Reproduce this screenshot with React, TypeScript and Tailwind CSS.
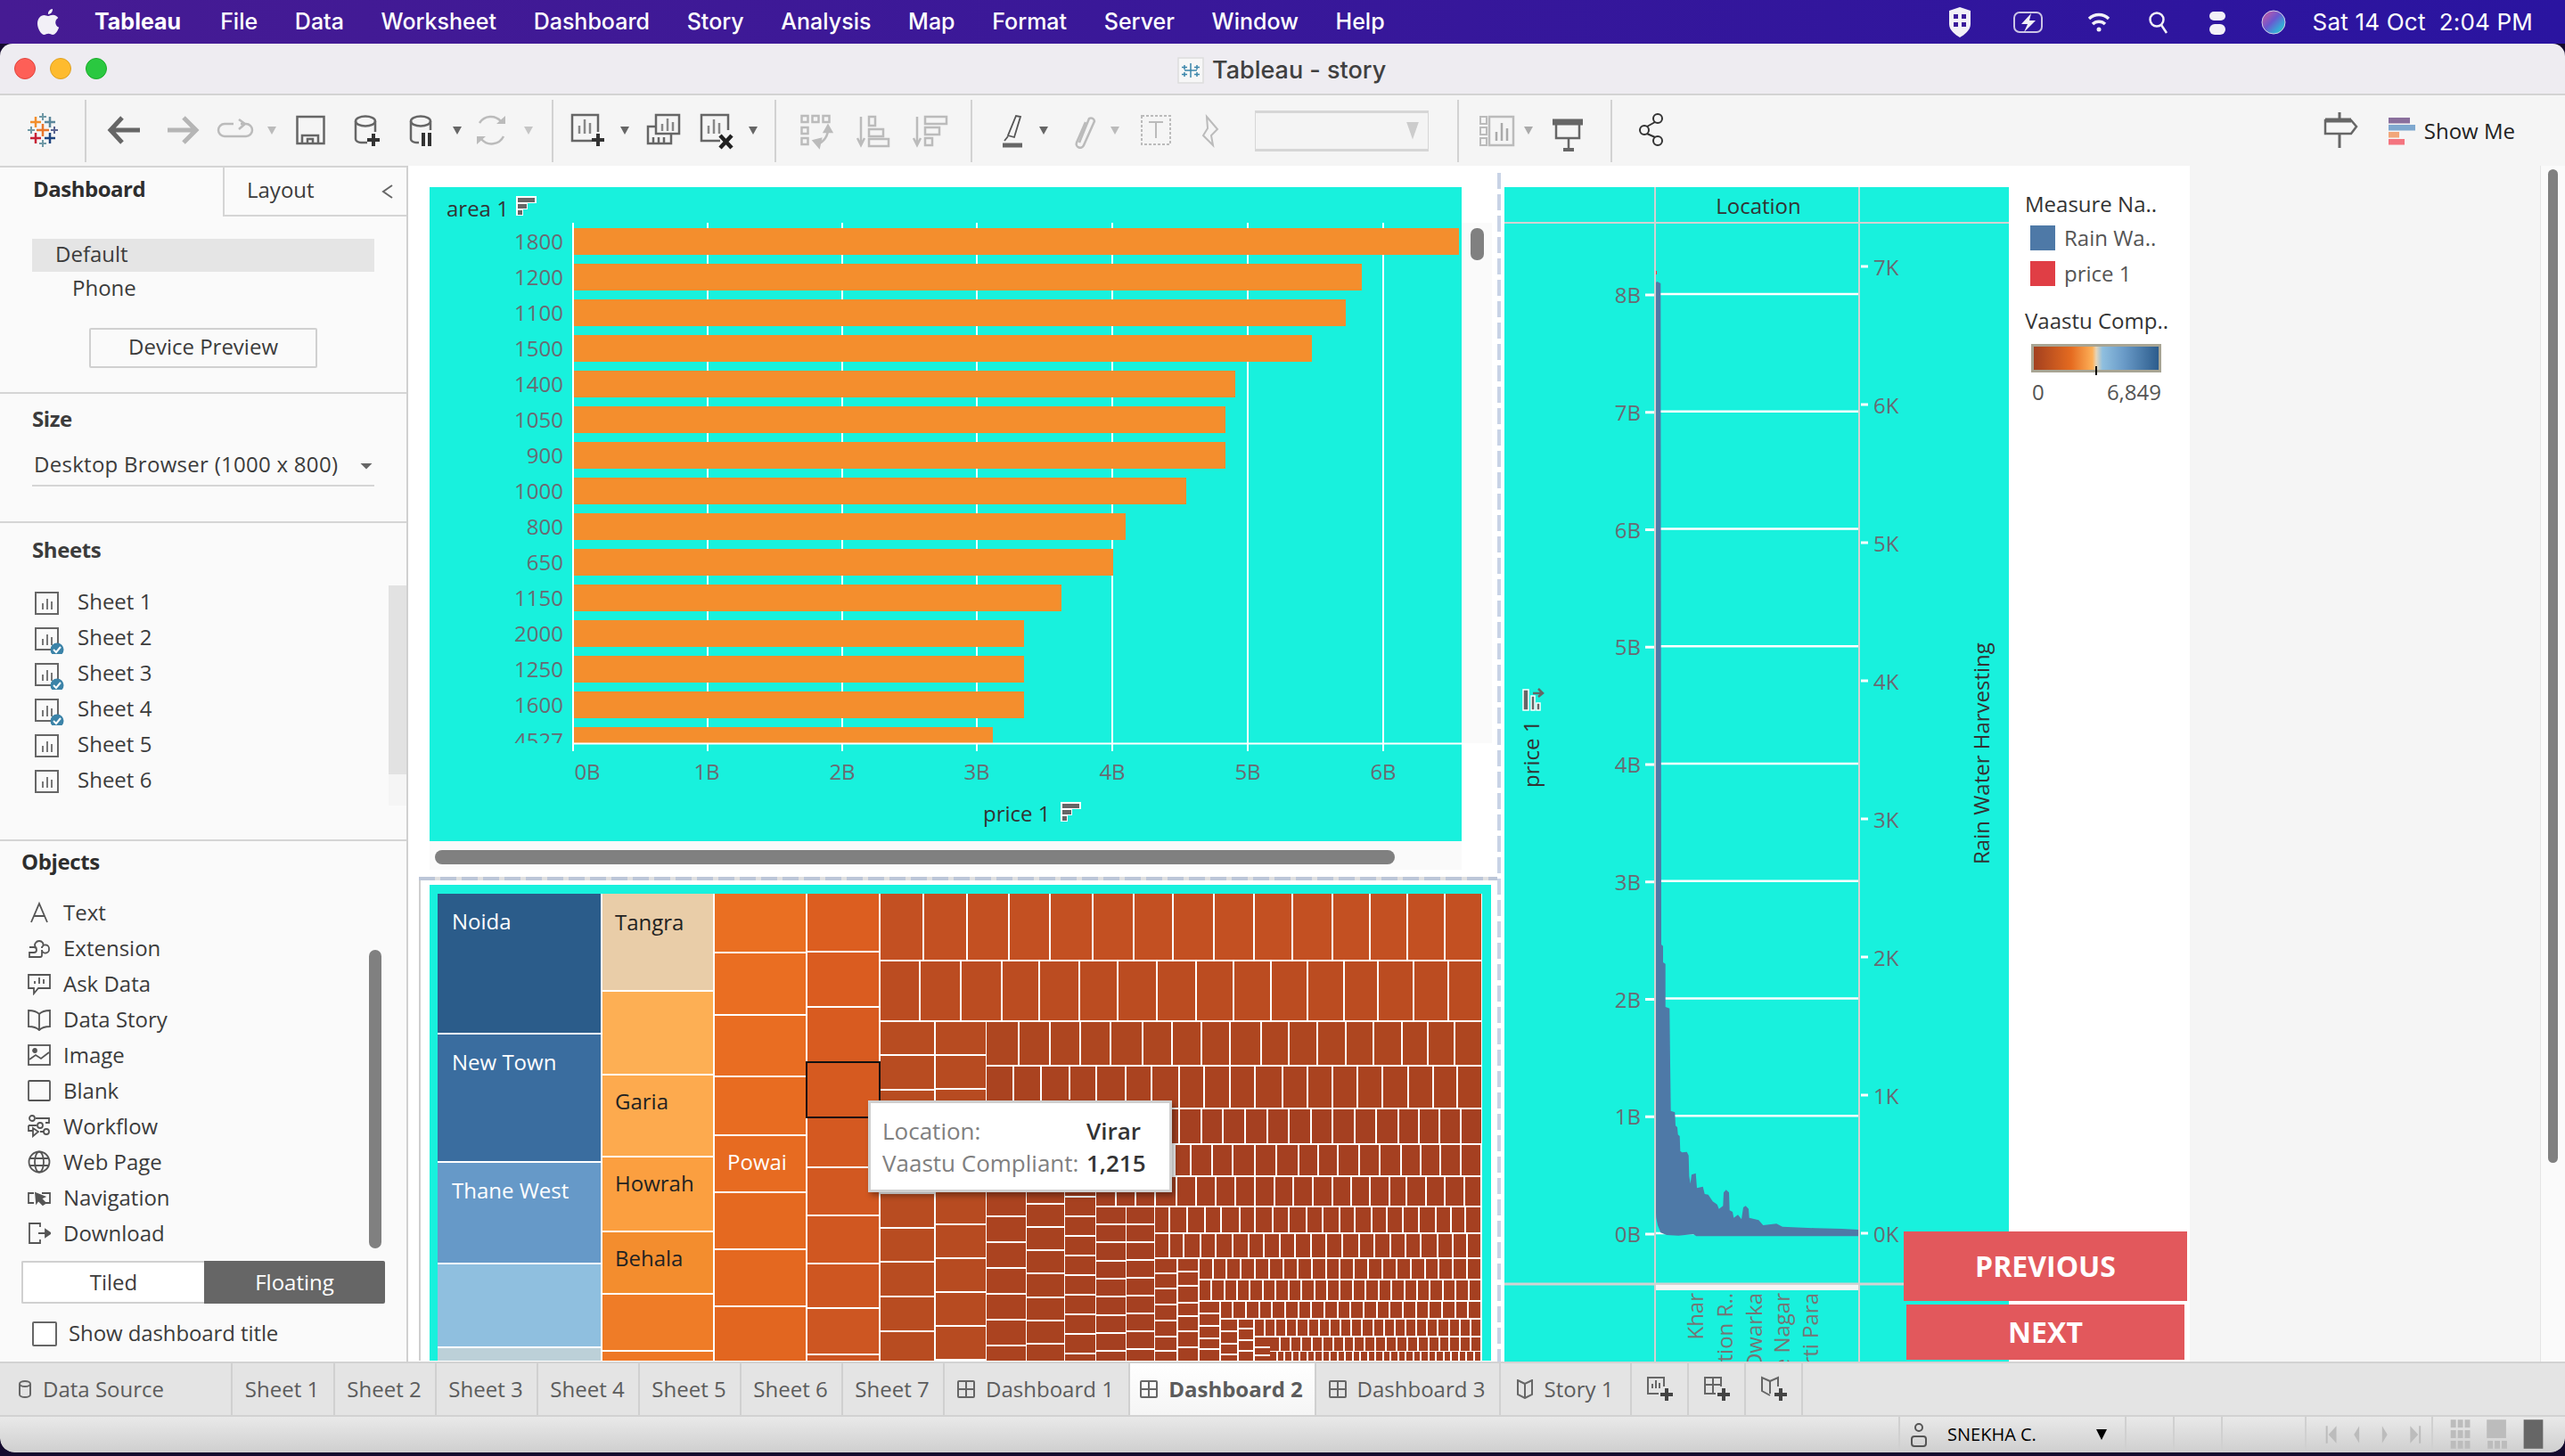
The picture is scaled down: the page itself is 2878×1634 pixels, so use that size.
import React from 'react';

const F = "'Open Sans', sans-serif";
const CY = '#18f1dd';

type Cell = [number, number, number, number, string];
const cells: Cell[] = [];
const zx = (x: number) => 470 + x / 1.285;
const zy = (y: number) => 980 + y / 2.8;
const ax = (x: number) => 980 + x / 2.272;
const ay = (y: number) => 1270 + y / 3;
const range = (s: number, st: number, n: number) => Array.from({ length: n }, (_, i) => s + st * i);
const END = 1532;
function vcol(x0: number, x1: number, tops: number[], fill: string | string[]) {
  tops.forEach((t, i) => {
    const b = i + 1 < tops.length ? tops[i + 1] - 2 : END;
    cells.push([x0, t, x1 - x0, b - t, Array.isArray(fill) ? fill[i] : fill]);
  });
}
function hrow(y0: number, y1: number, xs: number[], fill: string) {
  for (let i = 0; i + 1 < xs.length; i++) cells.push([xs[i], y0, xs[i + 1] - xs[i] - 2, y1 - y0, fill]);
}
const urow = (y0: number, y1: number, x0: number, x1: number, n: number, fill: string) =>
  hrow(y0, y1, range(x0, (x1 - x0) / n, n + 1), fill);

vcol(zx(27), zx(262), [66, 509, 912, 1231, 1494].map(zy), ['#2b5c8a', '#3a6d9f', '#6699c8', '#8fbfdf', '#bcd0d8']);
vcol(zx(265), zx(424), [66, 374, 637, 895, 1131, 1326, 1505].map(zy), ['#e9cda8', '#fdaf54', '#fdaa4e', '#fb9f40', '#f38d2e', '#ef7c27', '#ee7726']);
vcol(zx(427), zx(558), [66, 256, 452, 643, 828, 1007, 1186, 1365].map(zy), ['#ea6f22', '#ea6e22', '#e96d22', '#e86c21', '#e76b21', '#e56920', '#e46820', '#e26620']);
vcol(zx(560), zx(663), [66, 251, 425, 598, 774, 929, 1080, 1231, 1371, 1517].map(zy), ['#dc5e20', '#da5c20', '#d85b20', '#d65a20', '#d45921', '#d25821', '#d05721', '#ce5621', '#cd5622', '#cc5522']);
hrow(zy(66), zy(274), [665, 729, 791, 852, 911, 973, 1032, 1089, 1148, 1205, 1261, 1318, 1372, 1426, 1480, 1534.5].map(zx), '#c35022');
hrow(zy(279), zy(465), [665, 723, 783, 842, 896, 953, 1009, 1065, 1122, 1176, 1230, 1282, 1335, 1384, 1435, 1485, 1534.5].map(zx), '#bb4c21');
vcol(zx(665), zx(743), range(zy(469), 38.7, 11), '#b84c21');
vcol(zx(745), zx(817), range(zy(469), 38, 11), '#b74b21');
hrow(zy(469), zy(606), [819, 866, 911, 955, 998, 1045, 1087, 1130, 1171, 1215, 1256, 1297, 1338, 1377, 1418, 1456, 1494, 1534.5].map(zx), '#ae4620');
hrow(zy(610), zy(740), [819, 859, 898, 939, 978, 1020, 1058, 1097, 1133, 1171, 1207, 1246, 1283, 1318, 1354, 1390, 1427, 1463, 1498, 1534.5].map(zx), '#aa4320');
vcol(zx(819), zx(875), range(1251, 29, 10), '#ab4320');
vcol(zx(877), zx(930), range(1248, 26.2, 11), '#a84220');
vcol(zx(931), zx(975), range(1235, 22, 14), '#a74120');
vcol(ax(568), ax(642), range(1355.7, 20.3, 9), '#a54021');
vcol(ax(645), ax(715), range(1355.7, 20, 9), '#a54021');
hrow(zy(744), zy(852), [1065, 1097, 1130, 1160, 1193, 1225, 1256, 1287, 1318, 1350, 1382, 1413, 1443, 1473, 1503, 1534.5].map(zx), '#a54021');
hrow(ay(47), ay(150), [770, 810, 865, 918, 975, 1030, 1085, 1135, 1187, 1240, 1292, 1347, 1397, 1447, 1500, 1552].map(ax), '#a54021');
hrow(ay(155), ay(252), [568, 620, 670, 720, 775, 825, 875, 925, 975, 1025, 1072, 1122, 1172, 1220, 1268, 1317, 1362, 1412, 1458, 1508, 1552].map(ax), '#a54021');
hrow(ay(257), ay(342), [718, 757, 803, 848, 888, 935, 975, 1020, 1062, 1107, 1148, 1190, 1230, 1272, 1312, 1352, 1393, 1435, 1475, 1512, 1552].map(ax), '#a54021');
hrow(ay(347), ay(427), [718, 757, 793, 835, 875, 917, 958, 998, 1038, 1077, 1117, 1157, 1198, 1240, 1280, 1320, 1358, 1398, 1440, 1478, 1515, 1552].map(ax), '#a54021');
vcol(ax(718), ax(773), [432, 484, 533, 587, 641, 695, 743].map(ay), '#a54021');
vcol(ax(777), ax(828), [432, 478, 526, 581, 628, 677, 731].map(ay), '#a54021');
urow(ay(432), ay(498), ax(831), ax(1552), 20, '#a54021');
urow(ay(503), ay(570), ax(831), ax(1552), 22, '#a54021');
vcol(ax(832), ax(882), [575, 617, 659, 701, 737].map(ay), '#a54021');
urow(ay(575), ay(630), ax(885), ax(1552), 20, '#a54021');
vcol(ax(885), ax(928), [635, 678, 719, 755].map(ay), '#a54021');
vcol(ax(932), ax(968), [635, 670, 707, 743].map(ay), '#a54021');
urow(ay(635), ay(690), ax(972), ax(1552), 21, '#a54021');
vcol(ax(972), ax(1010), [695, 731, 760].map(ay), '#a54021');
urow(ay(695), ay(740), ax(1012), ax(1552), 20, '#a54021');
urow(ay(743), ay(780), ax(1012), ax(1552), 28, '#a54021');

const bars = [1637, 1528, 1510, 1472, 1386, 1375, 1375, 1331, 1263, 1249, 1191, 1149, 1149, 1149, 1114];
const barLabels = ['1800', '1200', '1100', '1500', '1400', '1050', '900', '1000', '800', '650', '1150', '2000', '1250', '1600', '4527'];
const gridX = [794, 945, 1096, 1248, 1400, 1552];

function SortIcon({ x, y }: { x: number; y: number }) {
  return (
    <g transform={`translate(${x} ${y})`}>
      <path d="M0 0H23V8H13V15H8V22H0Z" fill="#fff" />
      <path d="M2 2H21V7H2ZM2 9H12V14H2ZM2 16H7V21H2Z" fill="#666" />
    </g>
  );
}

function BarChart() {
  return (
    <svg width={1158} height={734} viewBox="482 210 1158 734" className="block shrink-0" fontFamily={F} fontSize={24}>
      <rect x={482} y={210} width={1158} height={734} fill={CY} />
      <path d={`M${gridX.map((x) => `${x} 250V843`).join('M')}`} stroke="#fff" strokeWidth={2} />
      {bars.map((b, i) => (
        <g key={i}>
          <rect x={643} y={256 + i * 40} width={b - 643} height={30} fill="#f48e2d" />
          <text x={632} y={280 + i * 40} textAnchor="end" fill="#6a6a72">{barLabels[i]}</text>
        </g>
      ))}
      <rect x={482} y={834} width={1158} height={110} fill={CY} />
      <path d={`M${gridX.map((x) => `${x} 834V843`).join('M')}`} stroke="#fff" strokeWidth={2} />
      <path d="M643 250V843M643 834.5H1640" stroke="#fff" strokeWidth={2} />
      {['0B', '1B', '2B', '3B', '4B', '5B', '6B'].map((t, i) => (
        <text key={t} x={[659, 793, 945, 1096, 1248, 1400, 1552][i]} y={875} textAnchor="middle" fill="#6a6a72">{t}</text>
      ))}
      <text x={501} y={243} fill="#333">area 1</text>
      <SortIcon x={579} y={220} />
      <text x={1103} y={922} fill="#333">price 1</text>
      <SortIcon x={1190} y={900} />
    </svg>
  );
}

function Treemap() {
  return (
    <svg width={1172} height={524} viewBox="491 1004 1172 524" className="block" fontFamily={F} fontSize={24} shapeRendering="crispEdges">
      <rect x={491} y={1004} width={1172} height={524} fill="#fff" />
      {cells.map((c, i) => <rect key={i} x={c[0]} y={c[1]} width={c[2]} height={c[3]} fill={c[4]} />)}
      <rect x={zx(559)} y={zy(596)} width={zx(664) - zx(559)} height={zy(771) - zy(596)} fill="none" stroke="#111" strokeWidth={2} />
      <g shapeRendering="auto">
        <text x={507} y={1044} fill="#fff">Noida</text>
        <text x={507} y={1202} fill="#fff">New Town</text>
        <text x={507} y={1346} fill="#fff">Thane West</text>
        <text x={690} y={1045} fill="#222">Tangra</text>
        <text x={690} y={1246} fill="#222">Garia</text>
        <text x={690} y={1338} fill="#222">Howrah</text>
        <text x={690} y={1422} fill="#222">Behala</text>
        <text x={816} y={1314} fill="#fff">Powai</text>
      </g>
    </svg>
  );
}

const areaPts: [number, number][] = [[20, -2046], [28, -2052], [40, -2046], [42, 180], [48, 185], [48, 240], [56, 245], [56, 390], [70, 395], [72, 580], [74, 740], [88, 745], [90, 790], [96, 795], [98, 820], [104, 825], [106, 875], [112, 880], [128, 878], [134, 890], [136, 960], [140, 985], [144, 955], [158, 950], [162, 1000], [182, 995], [188, 1020], [200, 1022], [215, 1045], [230, 1055], [236, 1070], [250, 1060], [252, 1015], [260, 1006], [270, 1015], [272, 1075], [282, 1080], [286, 1100], [300, 1090], [312, 1105], [318, 1065], [326, 1060], [336, 1070], [338, 1100], [370, 1108], [385, 1125], [430, 1120], [450, 1130], [560, 1135], [650, 1137], [705, 1140], [705, 1162], [160, 1162], [150, 1155], [100, 1160], [60, 1158], [40, 1150], [30, 1125], [25, 1100], [20, 1000]];
const areaD = areaPts.map(([x, y]) => `${(1850 + x / 3).toFixed(1)},${(1000 + y / 3).toFixed(1)}`).join(' ');

function DualChart() {
  const left = ['8B', '7B', '6B', '5B', '4B', '3B', '2B', '1B', '0B'];
  const right = ['7K', '6K', '5K', '4K', '3K', '2K', '1K', '0K'];
  return (
    <svg width={566} height={1318} viewBox="1688 210 566 1318" className="block shrink-0" fontFamily={F} fontSize={24}>
      <rect x={1688} y={210} width={566} height={1318} fill={CY} />
      {left.map((t, i) => {
        const y = 330 + i * 131.75;
        return (
          <g key={t}>
            <path d={`M1858 ${y}H2085`} stroke="#fff" strokeWidth={2.5} />
            <path d={`M1846 ${y + 1}H1856`} stroke="#fff" strokeWidth={3} />
            <text x={1841} y={y + 10} textAnchor="end" fill="#6a6a72">{t}</text>
          </g>
        );
      })}
      {right.map((t, i) => {
        const y = 299 + i * 155;
        return (
          <g key={t}>
            <path d={`M2088 ${y}H2096`} stroke="#fff" strokeWidth={3} />
            <text x={2102} y={y + 10} fill="#6a6a72">{t}</text>
          </g>
        );
      })}
      <polygon points={areaD} fill="#4e79a7" />
      <rect x={1857} y={304} width={2} height={4} fill="#e03e45" />
      <path d="M1688 250H2254" stroke="#d2d2d2" strokeWidth={2} />
      <path d="M1857 210V1528M2086 210V1528" stroke="#d2d2d2" strokeWidth={2} />
      <path d="M1688 1441H2254" stroke="#d2d2d2" strokeWidth={3} />
      <rect x={1858} y={1442} width={227} height={6} fill="#f5f5f5" />
      <text x={1973} y={240} textAnchor="middle" fill="#333">Location</text>
      <g fill="#757575">
        {[['Khar', 1911], ['Station R..', 1944], ['Dwarka', 1977], ['Vile Nagar', 2008], ['Kirti Para', 2040]].map(([t, x]) => (
          <text key={t} transform={`translate(${x} 1451) rotate(-90)`} textAnchor="end">{t}</text>
        ))}
      </g>
      <text transform="translate(1727 884) rotate(-90)" fill="#333">price 1</text>
      <g transform="translate(1707 771)">
        <path d="M2 3H8V26H2ZM11 10H15V26H11ZM17 18H21V26H17Z" fill="#666" stroke="#fff" strokeWidth={1.5} />
        <path d="M13 7H23M19 2L24 7L19 11" fill="none" stroke="#666" strokeWidth={2.5} />
      </g>
      <text transform="translate(2232 970) rotate(-90)" fill="#333" fontSize={24}>Rain Water Harvesting</text>
    </svg>
  );
}

const Caret = ({ x, c = '#666', y = 146 }: { x: number; c?: string; y?: number }) => (
  <path d={`M${x - 5} ${y - 4}H${x + 5}L${x} ${y + 5}Z`} fill={c} />
);
const plus = (x: number, y: number, s: number, c: string, w: number) => (
  <path key={`${x}${y}`} d={`M${x - s} ${y}H${x + s}M${x} ${y - s}V${y + s}`} stroke={c} strokeWidth={w} />
);
const Seq = () => <div className="w-[2px] h-[70px] bg-[#d2d2d2] shrink-0" />;

function ToolbarLeft() {
  return (
    <>
      <svg width={95} height={79} viewBox="0 107 95 79" className="shrink-0">
        {plus(48, 146, 7, '#e8762b', 2.5)}
        {plus(40, 137, 6, '#f28e2b', 2.5)}
        {plus(56, 137, 6, '#5b879b', 2.5)}
        {plus(48, 131, 4, '#7099a6', 2)}
        {plus(35, 146, 4, '#7099a6', 2)}
        {plus(61, 146, 4, '#5b6591', 2)}
        {plus(40, 155, 6, '#c72035', 2.5)}
        {plus(56, 155, 6, '#1f447e', 2.5)}
        {plus(48, 161, 4, '#7099a6', 2)}
      </svg>
      <Seq />
      <svg width={522} height={79} viewBox="97 107 522 79" className="shrink-0" fill="none">
        <path d="M137 132L124 146L137 160M124 146H157" stroke="#666" strokeWidth={5} />
        <path d="M206 132L220 146L206 160M188 146H220" stroke="#b5b5b5" strokeWidth={5} />
        <path d="M262 139H252a7 7 0 0 0 0 14H276a7 7 0 0 0 0-14H270M268 134L275 139L268 145" stroke="#bbb" strokeWidth={2.5} />
        <Caret x={305} c="#bbb" />
        <rect x={333.5} y={131} width={30} height={30} stroke="#666" strokeWidth={2.5} />
        <path d="M339 161V152H357V161M345 161V156H351V161" stroke="#666" strokeWidth={2.5} />
        <ellipse cx={410} cy={136} rx={11} ry={5.5} stroke="#666" strokeWidth={2.5} />
        <path d="M399 136V156a6 4 0 0 0 6 4H412M421 136V148" stroke="#666" strokeWidth={2.5} />
        {plus(419, 157, 7, '#333', 4)}
        <ellipse cx={472} cy={136} rx={11} ry={5.5} stroke="#666" strokeWidth={2.5} />
        <path d="M461 136V156a6 4 0 0 0 6 4H470M483 136V146" stroke="#666" strokeWidth={2.5} />
        <path d="M475 149V164M482 149V164" stroke="#333" strokeWidth={4} />
        <Caret x={513} />
        <path d="M538 138a15 15 0 0 1 24-2M565 153a15 15 0 0 1-25 3" stroke="#bbb" strokeWidth={2.5} />
        <path d="M557 139H567V130ZM545 153H535V162Z" fill="#bbb" />
        <Caret x={593} c="#c5c5c5" />
      </svg>
      <Seq />
      <svg width={248} height={79} viewBox="621 107 248 79" className="shrink-0" fill="none">
        <path d="M664 158H642V129H671V148" stroke="#666" strokeWidth={2.5} />
        <path d="M650 150V141M656 150V134M662 150V138" stroke="#888" strokeWidth={2.5} />
        {plus(671, 157, 7, '#333', 4)}
        <Caret x={701} />
        <rect x={736} y={129} width={26} height={21} stroke="#666" strokeWidth={2.5} fill="#f5f5f5" />
        <path d="M743 147V139M749 147V133M755 147V137" stroke="#888" strokeWidth={2.5} />
        <path d="M736 142H727V161H753V150M733 154V160M739 154V160M745 154V160" stroke="#666" strokeWidth={2.5} />
        <path d="M808 158H787V129H817V146" stroke="#666" strokeWidth={2.5} />
        <path d="M795 150V141M801 150V134M807 150V138" stroke="#888" strokeWidth={2.5} />
        <path d="M808 152L821 166M821 152L808 166" stroke="#222" strokeWidth={4.5} />
        <Caret x={845} />
      </svg>
      <Seq />
      <svg width={218} height={79} viewBox="871 107 218 79" className="shrink-0" fill="none" stroke="#bbb" strokeWidth={2.5}>
        <path d="M899.500 130h7v7h-7zM911.500 130h7v7h-7zM923.500 130h7v7h-7zM899.500 143h7v7h-7zM899.500 155h7v7h-7z" />
        <path d="M929 144a18 18 0 0 1-12 18" />
        <path d="M925 148L929 141L933 148ZM913 158L921 156L919 165Z" fill="#bbb" />
        <path d="M966 131V160M962 155L966 163L970 155" />
        <path d="M975 131h7v10h-7zM975 145h16v8h-16zM975 156h22v8h-22z" />
        <path d="M1029 131V160M1025 155L1029 163L1033 155" />
        <path d="M1038 131h24v8h-24zM1038 143h16v8h-16zM1038 155h8v8h-8z" />
      </svg>
      <Seq />
      <svg width={317} height={79} viewBox="1091 107 317 79" className="shrink-0" fill="none">
        <path d="M1145 131L1138 154L1131 152L1140 130Z" stroke="#555" strokeWidth={1.8} />
        <path d="M1131 153L1127 158" stroke="#555" strokeWidth={1.8} />
        <path d="M1125 163H1147" stroke="#666" strokeWidth={5} />
        <Caret x={1171} />
        <path d="M1211 160L1222 133a4 4 0 0 1 6 3L1216 163a4 4 0 0 1-8-3L1218 137" stroke="#bbb" strokeWidth={2.5} />
        <Caret x={1251} c="#bbb" />
        <rect x={1281} y={130} width={32} height={32} stroke="#bbb" strokeWidth={2} strokeDasharray="3 2" />
        <path d="M1289 137H1305M1297 137V155" stroke="#bbb" strokeWidth={2} />
        <path d="M1354 131L1366 145L1359 152L1361 163L1350 152L1355 144Z" stroke="#bbb" strokeWidth={2} />
      </svg>
      <div className="w-[195px] h-[46px] bg-[#f4f4f4] border-y-[3px] border-x border-[#d6d6d6] shrink-0 flex items-center justify-end pr-[10px]">
        <div className="w-[14px] h-[20px] bg-[#ccc] [clip-path:polygon(0_0,100%_0,50%_100%)]" />
      </div>
      <div className="w-[32px] shrink-0" />
      <Seq />
      <svg width={170} height={79} viewBox="1637 107 170 79" className="shrink-0" fill="none">
        <path d="M1661 131h7v8h-7zM1661 143h7v8h-7zM1661 155h7v8h-7z" stroke="#bbb" strokeWidth={2} />
        <rect x={1671} y={131} width={27} height={32} stroke="#bbb" strokeWidth={2.5} />
        <path d="M1679 158V148M1685 158V138M1691 158V144" stroke="#aaa" strokeWidth={2.5} />
        <Caret x={1715} c="#aaa" />
        <path d="M1742 137H1776" stroke="#666" strokeWidth={7} />
        <path d="M1746 137V155H1772V137" stroke="#666" strokeWidth={2.5} />
        <path d="M1760 155V168" stroke="#666" strokeWidth={2.5} />
        <path d="M1754 168H1766" stroke="#666" strokeWidth={4} />
      </svg>
      <Seq />
      <svg width={70} height={79} viewBox="1809 107 70 79" className="shrink-0" fill="none" stroke="#333" strokeWidth={2}>
        <circle cx={1860} cy={133} r={5} />
        <circle cx={1845} cy={146} r={5} />
        <circle cx={1860} cy={158} r={5} />
        <path d="M1857 137L1848 142M1848 150L1857 154" />
      </svg>
    </>
  );
}

const ChartIcon = ({ check }: { check?: boolean }) => (
  <svg width={34} height={34} viewBox="0 0 34 34" className="shrink-0">
    <rect x={1} y={5} width={25} height={24} fill="none" stroke="#666" strokeWidth={2} />
    <path d="M9 24V17M14 24V12M19 24V15" stroke="#777" strokeWidth={2} />
    {check && (
      <>
        <circle cx={25} cy={29} r={7.500} fill="#3b83a8" />
        <path d="M21 29L24 32L29 26" fill="none" stroke="#fff" strokeWidth={2} />
      </>
    )}
  </svg>
);

const icoProps = { width: 26, height: 26, viewBox: '0 0 26 26', fill: 'none', stroke: '#555', strokeWidth: 1.8, className: 'shrink-0' };
const objIcons: Record<string, React.ReactNode> = {
  Vertical: <svg {...icoProps}><rect x="2" y="4" width="22" height="18" /></svg>,
  Text: <svg {...icoProps}><path d="M4 24L13 3L22 24M7 17H19" /></svg>,
  Extension: <svg {...icoProps}><path d="M2 12H9a4 4 0 0 1 0-5a5 5 0 0 1 8 0a4 4 0 0 1-1 5V13a3 3 0 0 1 8 1a3 3 0 0 1-8 1V21a2 2 0 0 1-2 2H2V18H7a2 2 0 0 0 0-6Z" /></svg>,
  'Ask Data': <svg {...icoProps}><path d="M1 3H25V18H12L7 24V18H1Z" /><path d="M8 13V10M13 13V6M18 13V8" /></svg>,
  'Data Story': <svg {...icoProps}><path d="M13 7C10 4 5 3 1 3V21C5 21 10 22 13 25C16 22 21 21 25 21V3C21 3 16 4 13 7ZM13 7V25" /></svg>,
  Image: <svg {...icoProps}><rect x="1" y="2" width="24" height="22" /><circle cx="8" cy="8" r="2" fill="#555" /><path d="M2 18L9 13L15 17L24 10" /></svg>,
  Blank: <svg {...icoProps}><rect x="1" y="2" width="24" height="22" rx="1" /></svg>,
  Workflow: <svg {...icoProps}><circle cx="5" cy="4" r="3" /><path d="M9 4H24V9H20M1 12H10" /><circle cx="14" cy="12" r="3" /><path d="M1 12V18H6M6 15L12 19L6 24ZM14 19H18" /><circle cx="21" cy="19" r="3" /></svg>,
  'Web Page': <svg {...icoProps}><circle cx="13" cy="13" r="11.500" /><ellipse cx="13" cy="13" rx="5" ry="11.500" /><path d="M2 9H24M2 17H24" /></svg>,
  Navigation: <svg {...icoProps}><path d="M7 8H1V19H7M16 8H25V19H18" /><path d="M9 8L19 12L15 14L20 19L17 21L12 16L10 19Z" fill="#555" /></svg>,
  Download: <svg {...icoProps}><path d="M14 6V2H2V24H14V20M12 13H20" /><path d="M20 9L26 13L20 17Z" fill="#555" /></svg>,
};

const Divider = () => <div className="h-[2px] bg-[#d5d5d5] shrink-0" />;

function Sidebar() {
  const objects = ['Vertical', 'Text', 'Extension', 'Ask Data', 'Data Story', 'Image', 'Blank', 'Workflow', 'Web Page', 'Navigation', 'Download'];
  return (
    <aside className="w-[458px] shrink-0 bg-[#fafafa] border-r-2 border-[#d0d0d0] flex flex-col text-[24px] text-[#3c3c3c] font-['Open_Sans',sans-serif] overflow-hidden">
      <div className="h-[2px] bg-[#d5d5d5] shrink-0" />
      <div className="h-[55px] flex shrink-0">
        <div className="w-[250px] pl-[37px] pb-[7px] font-bold tracking-[-0.5px] flex items-center text-[#2e2e2e]">Dashboard</div>
        <div className="flex-1 border-l-2 border-b-2 border-[#d5d5d5] flex items-center pl-[25px] pr-[14px] justify-between">
          <span className="mb-[3px]">Layout</span>
          <svg width="14" height="20" viewBox="0 0 14 20" fill="none" stroke="#666" strokeWidth="2"><path d="M12 3L2 10L12 17" /></svg>
        </div>
      </div>
      <div className="h-[197px] shrink-0 pt-[25px]">
        <div className="mx-[36px] h-[37px] bg-[#e5e5e5] pl-[26px] pb-[3px] flex items-center">Default</div>
        <div className="h-[38px] pl-[81px] pb-[3px] flex items-center">Phone</div>
        <button className="block w-[256px] h-[45px] ml-[100px] mt-[25px] pb-[3px] border-2 border-[#d0d0d0] rounded-[2px] bg-[#fafafa] text-center">Device Preview</button>
      </div>
      <Divider />
      <div className="h-[143px] shrink-0 px-[36px] pt-[13px]">
        <div className="font-bold tracking-[-0.4px] h-[30px] flex items-center">Size</div>
        <div className="mt-[17px] h-[44px] border-b-2 border-[#d5d5d5] flex items-center justify-between pl-[2px] pr-[2px]">
          <span className="tracking-[0.28px] mb-[5px]">Desktop Browser (1000 x 800)</span>
          <div className="w-[14px] h-[7px] bg-[#666] [clip-path:polygon(0_0,100%_0,50%_100%)]" />
        </div>
      </div>
      <Divider />
      <div className="h-[355px] shrink-0 flex flex-col">
        <div className="pl-[36px] h-[60px] flex items-center font-bold tracking-[-0.4px]">Sheets</div>
        <div className="h-[10px] shrink-0" />
        <div className="flex h-[247px] overflow-hidden">
          <div className="flex-1 pl-[39px]">
            {[false, true, true, true, false, false, false].map((c, i) => (
              <div key={i} className="h-[40px] flex items-center gap-[14px]">
                <ChartIcon check={c} />
                <span className="mb-[5px]">Sheet {i + 1}</span>
              </div>
            ))}
          </div>
          <div className="w-[20px] bg-[#f5f5f5] flex flex-col">
            <div className="h-[212px] bg-[#e2e2e2]" />
          </div>
        </div>
      </div>
      <Divider />
      <div className="pl-[24px] h-[50px] pb-[5px] flex items-center font-bold tracking-[-0.4px] text-[#2e2e2e] shrink-0">Objects</div>
      <div className="h-[410px] shrink-0 flex overflow-hidden pr-[28px]">
        <div className="flex-1 pl-[31px] mt-[-30px]">
          {objects.map((o) => (
            <div key={o} className="h-[40px] flex items-center gap-[14px]">
              {objIcons[o]}
              <span>{o}</span>
            </div>
          ))}
        </div>
        <div className="w-[14px] h-[335px] mt-[72px] rounded-[7px] bg-[#808080]" />
      </div>
      <div className="flex mx-[24px] h-[48px] shrink-0 mt-[11px]">
        <div className="w-[205px] border-2 border-r-0 border-[#d0d0d0] bg-white flex items-center justify-center rounded-l-[2px]">Tiled</div>
        <div className="flex-1 bg-[#666] text-white flex items-center justify-center rounded-r-[2px]">Floating</div>
      </div>
      <div className="flex items-center mt-[15px] pl-[36px] gap-[13px]">
        <div className="w-[28px] h-[28px] border-2 border-[#666] rounded-[2px] bg-white" />
        <span className="mb-[2px] tracking-[-0.1px]">Show dashboard title</span>
      </div>
    </aside>
  );
}

function Legend() {
  return (
    <div className="w-[203px] shrink-0 pl-[18px] pt-[3px] text-[24px] leading-[32px] font-['Open_Sans',sans-serif] text-[#333] whitespace-nowrap">
      <div>Measure Na..</div>
      <div className="flex items-center gap-[10px] pl-[6px] mt-[8px] h-[28px] text-[#555]">
        <div className="w-[28px] h-[28px] bg-[#4e79a7]" />Rain Wa..
      </div>
      <div className="flex items-center gap-[10px] pl-[6px] mt-[12px] h-[28px] text-[#555]">
        <div className="w-[28px] h-[28px] bg-[#e03e45]" />price 1
      </div>
      <div className="mt-[23px]">Vaastu Comp..</div>
      <div className="relative ml-[7px] mt-[10px] w-[146px] h-[32px] border-[3px] border-[#a8a594] bg-[linear-gradient(to_right,#a3401f,#e56b20_30%,#fdb058_47%,#e6d5b8_50%,#8fbfdf_55%,#6a9bc8_72%,#2c5c8c)]">
        <div className="absolute left-[69px] top-[22px] w-[2px] h-[10px] bg-black" />
      </div>
      <div className="flex justify-between ml-[8px] w-[145px] mt-[6px] text-[#555]">
        <span>0</span><span>6,849</span>
      </div>
    </div>
  );
}

function Canvas() {
  return (
    <div className="w-[1999px] shrink-0 bg-white relative flex font-['Open_Sans',sans-serif]">
      <div className="w-[1194px] ml-[24px] shrink-0 pt-[24px] flex flex-col">
        <div className="flex">
          <BarChart />
          <div className="mt-[40px] h-[584px] w-[34px] bg-[#fafafa] pl-[10px] pt-[6px]">
            <div className="w-[15px] h-[36px] rounded-[7px] bg-[#808080]" />
          </div>
        </div>
        <div className="w-[1158px] h-[32px] bg-[#fafafa] pl-[6px] pt-[10px]">
          <div className="w-[1077px] h-[16px] rounded-[8px] bg-[#808080]" />
        </div>
        <div className="ml-[-12px] w-[1210px] h-[4px] mt-[8px] bg-[repeating-linear-gradient(to_right,#bcc6d8_0,#bcc6d8_18px,#e0e0e0_18px,#e0e0e0_24px)]" />
        <div className="ml-[-12px] pl-[10px] border-l-2 border-[#cfcfcf] pt-[5px]">
          <div className="bg-[#18f1dd] pt-[10px] px-[9px] w-[1191px] h-[534px] overflow-hidden">
            <Treemap />
          </div>
        </div>
      </div>
      <div className="w-[4px] ml-[4px] shrink-0 mt-[8px] bg-[repeating-linear-gradient(to_bottom,#c8d3e6_0,#c8d3e6_18px,transparent_18px,transparent_24px)]" />
      <div className="ml-[4px] pt-[24px] flex shrink-0">
        <DualChart />
        <Legend />
      </div>
      <div className="absolute left-[516px] top-[1049px] w-[341px] h-[103px] bg-white border-[3px] border-[#cfcfcf] shadow-[3px_4px_6px_rgba(0,0,0,0.35)] text-[26px] leading-[36px] pl-[13px] pt-[13px] text-[#808080]">
        <div className="flex"><span className="w-[229px]">Location:</span><span className="text-[#333] font-semibold">Virar</span></div>
        <div className="flex"><span className="w-[229px] whitespace-nowrap">Vaastu Compliant:</span><span className="text-[#333] font-semibold">1,215</span></div>
      </div>
      <div className="absolute left-[1678px] top-[1196px] w-[318px] flex flex-col items-center gap-[4px] text-white font-bold text-[32px]">
        <div className="w-[318px] h-[78px] bg-[#e2585c] flex items-center justify-center">PREVIOUS</div>
        <div className="w-[312px] h-[62px] bg-[#e2585c] flex items-center justify-center">NEXT</div>
      </div>
    </div>
  );
}

const TabIcon = ({ kind }: { kind: string }) => {
  if (kind === 'dash')
    return <svg width="20" height="20" viewBox="0 0 20 20" fill="none" stroke="#666" strokeWidth="2" className="shrink-0"><rect x="1" y="1" width="18" height="18" rx="1" /><path d="M10 1V19M1 10H19" /></svg>;
  if (kind === 'story')
    return <svg width="20" height="22" viewBox="0 0 20 22" fill="none" stroke="#666" strokeWidth="2" className="shrink-0"><path d="M10 5L2 1V17L10 21L18 17V1ZM10 5V21" /></svg>;
  if (kind === 'ds')
    return <svg width="16" height="22" viewBox="0 0 16 22" fill="none" stroke="#666" strokeWidth="2" className="shrink-0"><ellipse cx="8" cy="5" rx="6" ry="3" /><path d="M2 5V17a6 3 0 0 0 12 0V5" /></svg>;
  return null;
};

function Tabs() {
  const tabs: [string, number, string, boolean?][] = [
    ['Sheet 1', 115, ''], ['Sheet 2', 114, ''], ['Sheet 3', 114, ''], ['Sheet 4', 114, ''], ['Sheet 5', 114, ''], ['Sheet 6', 114, ''], ['Sheet 7', 114, ''],
    ['Dashboard 1', 208, 'dash'], ['Dashboard 2', 209, 'dash', true], ['Dashboard 3', 207, 'dash'], ['Story 1', 147, 'story'],
  ];
  const adders = [
    <path key="a" d="M14 20H2V2H20V12M7 14V9M11 14V5M15 14V8" />,
    <path key="b" d="M14 20H2V2H20V12M11 2V20M2 10H20" />,
    <path key="c" d="M11 6L2 2V17L11 22M11 6L20 2V12M11 6V20" />,
  ];
  return (
    <div className="h-[62px] shrink-0 bg-[#e4e4e4] border-y-2 border-[#d2d2d2] flex text-[24px] text-[#5c5c5c] font-['Open_Sans',sans-serif] whitespace-nowrap">
      <div className="w-[261px] shrink-0 border-r-2 border-[#d0d0d0] flex items-center pl-[20px] gap-[12px]">
        <TabIcon kind="ds" />Data Source
      </div>
      {tabs.map(([t, w, k, a]) => (
        <div
          key={t}
          style={{ width: w }}
          className={`shrink-0 border-r-2 border-[#d0d0d0] flex items-center justify-center gap-[12px] pr-[2px] ${a ? 'bg-[linear-gradient(#fff,#f5f5f5)] font-bold' : ''}`}
        >
          <TabIcon kind={k} />{t}
        </div>
      ))}
      {adders.map((p, i) => (
        <div key={i} className="w-[64px] shrink-0 border-r-2 border-[#d0d0d0] flex items-center justify-center">
          <svg width="30" height="30" viewBox="0 0 30 30" fill="none" stroke="#666" strokeWidth="2">
            {p}
            <path d="M23 14V28M16 21H30" stroke="#444" strokeWidth="4" />
          </svg>
        </div>
      ))}
    </div>
  );
}

function StatusBar() {
  return (
    <div className="h-[40px] shrink-0 bg-[linear-gradient(to_bottom,#e9e9e9,#cfcfcf)] flex justify-end rounded-b-[16px] overflow-hidden font-['Open_Sans',sans-serif]">
      <div className="w-[254px] border-l-2 border-[#d0d0d0] flex items-center pl-[9px] gap-[20px] text-[20px] text-black">
        <svg width="24" height="30" viewBox="0 0 24 30" fill="none" stroke="#555" strokeWidth="2" className="shrink-0"><circle cx="12" cy="7" r="4" /><rect x="4" y="17" width="16" height="11" rx="3" /></svg>
        <span className="flex-1">SNEKHA C.</span>
        <div className="w-[12px] h-[12px] mr-[20px] bg-black [clip-path:polygon(0_0,100%_0,50%_100%)]" />
      </div>
      <div className="w-[54px] border-l-2 border-[#d0d0d0]" />
      <div className="w-[54px] border-l-2 border-[#d0d0d0]" />
      <div className="w-[94px] border-l-2 border-[#d0d0d0]" />
      <svg width="142" height="40" viewBox="2586 1590 142 40" className="shrink-0 border-l-2 border-[#d0d0d0]" fill="#bcbcbc">
        <path d="M2608 1600H2610V1620H2608ZM2620 1600V1620L2611 1610Z" />
        <path d="M2646 1600V1620L2640 1610Z" />
        <path d="M2672 1600V1620L2678 1610Z" />
        <path d="M2704 1600V1620L2713 1610ZM2714 1600H2716V1620H2714Z" />
      </svg>
      <svg width="150" height="40" viewBox="2728 1590 150 40" className="shrink-0 border-l-2 border-[#d0d0d0]">
        <g fill="#bcbcbc">
          {[0, 1, 2].map((r) => [0, 1, 2].map((c) => <rect key={`${r}${c}`} x={2748 + c * 8} y={1593 + r * 12} width={6} height={9} />))}
          <rect x={2789} y={1593} width={22} height={21} />
          {[0, 1, 2].map((c) => <rect key={c} x={2790 + c * 8} y={1617} width={6} height={9} />)}
        </g>
        <rect x={2831} y={1593} width={22} height={33} fill="#666" />
      </svg>
    </div>
  );
}

function MenuBar() {
  const items = ['File', 'Data', 'Worksheet', 'Dashboard', 'Story', 'Analysis', 'Map', 'Format', 'Server', 'Window', 'Help'];
  return (
    <div className="h-[49px] shrink-0 bg-[linear-gradient(to_right,#461b93,#2a14a0)] flex items-center text-white text-[25px] font-['Inter',sans-serif] whitespace-nowrap">
      <svg width="28" height="32" viewBox="0 0 28 32" fill="#f2f0f7" className="ml-[40px] mr-[38px] shrink-0">
        <path d="M19 1c.3 3-2 6-5 6-.4-3 2.300-6 5-6ZM14 9c1.500 0 3-1.200 5.500-1.200 2.500 0 4.500 1.300 5.800 3.200-4.500 2.800-3.800 9 .9 10.800-1.300 3.500-4 8.200-7 8.200-1.800 0-2.700-1.200-4.800-1.200s-3.100 1.200-4.800 1.200C6 30 2 23 2 17.500 2 12 5.500 8 9.500 8c1.800 0 3.200 1 4.500 1Z" />
      </svg>
      <span className="font-bold mr-[44px]">Tableau</span>
      <div className="flex gap-[41.7px] font-medium">
        {items.map((m) => <span key={m}>{m}</span>)}
      </div>
      <div className="ml-auto flex items-center gap-[30px] pr-[36px]">
        <svg width="380" height="40" viewBox="2185 4 380 40" fill="none" stroke="#f2f0f7" className="shrink-0">
          <defs>
            <linearGradient id="siri" x1="0" y1="0" x2="1" y2="1">
              <stop offset="0" stopColor="#d8589a" />
              <stop offset="0.45" stopColor="#6a58d0" />
              <stop offset="0.75" stopColor="#36a8d8" />
              <stop offset="1" stopColor="#48d0a0" />
            </linearGradient>
          </defs>
          <path d="M2199 7L2211 11V26C2211 33 2204 38 2199 41C2194 38 2187 33 2187 26V11Z" fill="#f2f0f7" stroke="none" />
          <path d="M2192 15h5v5h-5zM2201 15h5v5h-5zM2192 24h5v5h-5zM2201 24h5v5h-5z" fill="#3a1a9a" stroke="none" />
          <rect x="2260" y="13" width="31" height="22" rx="6" strokeWidth="2" opacity=".8" />
          <path d="M2279 14L2268 26H2275L2271 35L2284 22H2277Z" fill="#f2f0f7" stroke="none" />
          <path d="M2344 20a16 16 0 0 1 22 0M2348 26a10 10 0 0 1 14 0" strokeWidth="3.5" />
          <circle cx="2355" cy="32" r="2.500" fill="#f2f0f7" stroke="none" />
          <circle cx="2420" cy="21" r="7.500" strokeWidth="2.500" />
          <path d="M2425 27L2431 36" strokeWidth="2.500" />
          <rect x="2479" y="12" width="18" height="10" rx="5" fill="#f2f0f7" stroke="none" />
          <rect x="2479" y="26" width="18" height="12" rx="6" fill="#f2f0f7" stroke="none" />
          <circle cx="2551" cy="24" r="13" fill="url(#siri)" stroke="#cfd0e8" strokeWidth="1" />
        </svg>
        <span className="font-normal text-[26px] tracking-[0.2px]">Sat 14 Oct&nbsp;&nbsp;2:04 PM</span>
      </div>
    </div>
  );
}

export default function App() {
  return (
    <div className="w-[2878px] h-[1634px] overflow-hidden bg-[#140a2e] flex flex-col">
      <MenuBar />
      <div className="flex-1 min-h-0 flex flex-col rounded-t-[14px] rounded-b-[16px] overflow-hidden mb-[4px]">
        <div className="h-[58px] shrink-0 bg-[#eeecf1] border-b-2 border-[#d3d3d3] flex items-center relative">
          <div className="flex gap-[16px] ml-[16px]">
            <div className="w-[24px] h-[24px] rounded-full bg-[#fe5f57] border border-[#e0443e]" />
            <div className="w-[24px] h-[24px] rounded-full bg-[#febb2e] border border-[#dea123]" />
            <div className="w-[24px] h-[24px] rounded-full bg-[#2ac840] border border-[#1aab29]" />
          </div>
          <div className="absolute left-[1321px] top-[10px] flex items-center gap-[9px] text-[27px] font-medium text-[#404040] font-['Inter',sans-serif] whitespace-nowrap">
            <svg width="30" height="30" viewBox="0 0 30 30" stroke="#3b86ab" strokeWidth="1.500">
              <rect x="1" y="1" width="28" height="28" fill="#f7f7f7" stroke="#ddd" />
              <path d="M15 7V23M8 15H22M8 9V14M5 11.500H11M22 9V14M19 11.500H25M8 17V22M5 19.500H11M22 17V22M19 19.500H25" />
            </svg>
            Tableau - story
          </div>
        </div>
        <div className="h-[79px] shrink-0 bg-[#f5f5f5] flex items-center">
          <ToolbarLeft />
          <div className="ml-auto flex items-center text-[24px] text-[#222] font-['Open_Sans',sans-serif] pr-[56px]">
            <svg width="120" height="46" viewBox="2600 123 120 46" fill="none" className="shrink-0">
              <path d="M2625 125V165" stroke="#666" strokeWidth="3" />
              <path d="M2609 134H2638L2644 141L2638 149H2609Z" fill="#f5f5f5" stroke="#666" strokeWidth="2.500" />
              <path d="M2609 134H2638" stroke="#666" strokeWidth="5" />
              <rect x="2680" y="131" width="24" height="6.500" fill="#8a6f9c" />
              <rect x="2680" y="139" width="30" height="6.500" fill="#7fa8cf" />
              <rect x="2680" y="147" width="12" height="6.500" fill="#f1a67a" />
              <rect x="2680" y="155" width="18" height="6.500" fill="#f4747f" />
            </svg>
            Show Me
          </div>
        </div>
        <div className="flex-1 min-h-0 flex">
          <Sidebar />
          <Canvas />
          <div className="flex-1 bg-[#f5f5f5] flex justify-end">
            <div className="w-[28px] h-full bg-[#fafafa] border-l border-[#e5e5e5] pt-[4px] pl-[8px]">
              <div className="w-[11px] h-[1115px] rounded-[6px] bg-[#808080]" />
            </div>
          </div>
        </div>
        <Tabs />
        <StatusBar />
      </div>
    </div>
  );
}
